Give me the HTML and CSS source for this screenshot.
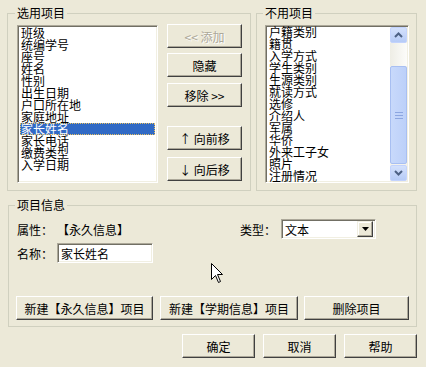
FILE: index.html
```html
<!doctype html>
<html>
<head>
  <meta charset="utf-8">
  <link rel="stylesheet" href="styles.css">
</head>
<body>
  <div class="dialog">
    <div class="top">
      <fieldset class="group groupUsed">
        <legend>选用项目</legend>
        <div class="usedBody">
          <div class="listbox usedList">
            <div class="item">班级</div>
            <div class="item">统编学号</div>
            <div class="item">座号</div>
            <div class="item">姓名</div>
            <div class="item">性别</div>
            <div class="item">出生日期</div>
            <div class="item">户口所在地</div>
            <div class="item">家庭地址</div>
            <div class="item selected">家长姓名</div>
            <div class="item">家长电话</div>
            <div class="item">缴费类型</div>
            <div class="item">入学日期</div>
          </div>
          <div class="btnColumn">
            <button class="btn sideBtn disabled">&lt;&lt; 添加</button>
            <button class="btn sideBtn gapA">隐藏</button>
            <button class="btn sideBtn gapB">移除 &gt;&gt;</button>
            <button class="btn sideBtn gapC">↑ 向前移</button>
            <button class="btn sideBtn gapD">↓ 向后移</button>
          </div>
        </div>
      </fieldset>

      <fieldset class="group groupUnused">
        <legend>不用项目</legend>
        <div class="listbox unusedList">
          <div class="items">
            <div class="item">户籍类别</div>
            <div class="item">籍贯</div>
            <div class="item">入学方式</div>
            <div class="item">学生类别</div>
            <div class="item">生源类别</div>
            <div class="item">就读方式</div>
            <div class="item">选修</div>
            <div class="item">介绍人</div>
            <div class="item">军属</div>
            <div class="item">华侨</div>
            <div class="item">外来工子女</div>
            <div class="item">照片</div>
            <div class="item">注册情况</div>
          </div>
          <div class="scrollbar">
            <div class="sbBtn">
              <svg width="9" height="6" viewBox="0 0 9 6"><path d="M1 5 L4.5 1.5 L8 5" fill="none" stroke="#4d6185" stroke-width="2"/></svg>
            </div>
            <div class="sbTrack"></div>
            <div class="sbThumb">
              <svg width="8" height="7" viewBox="0 0 8 7"><path d="M0 0.5H8M0 3.5H8M0 6.5H8" stroke="#8ca6e0" stroke-width="1"/></svg>
            </div>
            <div class="sbBtn">
              <svg width="9" height="6" viewBox="0 0 9 6"><path d="M1 1 L4.5 4.5 L8 1" fill="none" stroke="#4d6185" stroke-width="2"/></svg>
            </div>
          </div>
        </div>
      </fieldset>
    </div>

    <fieldset class="group groupInfo">
      <legend>项目信息</legend>
      <div class="infoRow">
        <span class="label">属性：</span>
        <span class="value">【永久信息】</span>
        <span class="typeLabel">类型：</span>
        <div class="combo">
          <span class="comboText">文本</span>
          <span class="comboBtn">
            <svg width="7" height="4" viewBox="0 0 7 4"><path d="M0 0H7L3.5 4Z" fill="#000"/></svg>
          </span>
        </div>
      </div>
      <div class="infoRow second">
        <span class="label">名称：</span>
        <div class="textbox">家长姓名</div>
      </div>
      <div class="actionRow">
        <button class="btn newPerm">新建【永久信息】项目</button>
        <button class="btn newTerm">新建【学期信息】项目</button>
        <button class="btn delItem">删除项目</button>
      </div>
    </fieldset>

    <div class="footer">
      <button class="btn footBtn">确定</button>
      <button class="btn footBtn">取消</button>
      <button class="btn footBtn">帮助</button>
    </div>
  </div>

  <svg class="cursor" width="13" height="21" viewBox="0 0 13 21">
    <path d="M0.5 0.5 V16.5 L4.5 12.5 L7.5 19.5 L9.5 18.5 L6.5 11.5 L11.5 11.5 Z" fill="#fff" stroke="#000" stroke-width="1"/>
  </svg>
</body>
</html>
```

FILE: styles.css
```css
body{
  margin:0;
  background:#ece9d8;
  font-family:"Noto Sans CJK SC", "DejaVu Sans", sans-serif;
  font-size:12px;
  color:#000;
}
.dialog{
  width:426px;
  height:367px;
  padding-top:6px;
  box-sizing:border-box;
}
.top{
  display:flex;
  gap:5px;
  margin-left:7px;
}

/* group boxes */
.group{
  margin:0;
  min-width:0;
  border:1px solid #d0d0bf;
  box-sizing:border-box;
}
.group legend{
  padding:0 2px;
  margin-left:-2px;
  line-height:14px;
  font-size:12px;
}
.groupUsed{
  width:244px;
  height:185px;
  padding:5px 8px 0 9px;
}
.groupUnused{
  width:161px;
  height:185px;
  padding:5px 7px 0 8px;
}
.groupInfo{
  width:409px;
  height:129px;
  margin:7px 0 0 8px;
  padding:7px 7px 0 8px;
}

/* list boxes */
.listbox{
  background:#fff;
  border:1px solid;
  border-color:#aca899 #fff #fff #aca899;
  box-shadow:inset 1px 1px 0 #716f64, inset -1px -1px 0 #f1efe2;
  box-sizing:border-box;
  padding:1px 2px 2px 2px;
  height:158px;
  overflow:hidden;
}
.usedBody{
  display:flex;
}
.usedList{
  width:142px;
}
.item{
  height:12px;
  line-height:12px;
  padding-left:1px;
  white-space:nowrap;
}
.item.selected{
  background:#316ac5;
  color:#fff;
  outline:1px dotted #e8c060;
  outline-offset:-1px;
}
.unusedList{
  width:144px;
  display:flex;
  padding:1px 1px 1px 2px;
}
.items{
  flex:1;
  margin-top:-1px;
}

/* scrollbar */
.scrollbar{
  width:17px;
  display:flex;
  flex-direction:column;
  background:#f3f2ec;
}
.sbBtn{
  height:16px;
  background:linear-gradient(#d4e1fc, #b6cbf7);
  border:1px solid #c3d3fd;
  border-radius:2px;
  box-sizing:border-box;
  display:flex;
  align-items:center;
  justify-content:center;
}
.sbTrack{
  height:23px;
  background:linear-gradient(90deg, #eeede5, #fcfcfa);
}
.sbThumb{
  flex:1;
  background:linear-gradient(90deg, #c8d9fb, #bcd0f9);
  border:1px solid #a8bff2;
  border-radius:2px;
  display:flex;
  align-items:center;
  justify-content:center;
  margin-bottom:1px;
}

/* buttons */
.btn{
  font-family:"Noto Sans CJK SC", "DejaVu Sans", sans-serif;
  font-size:12px;
  color:#000;
  background:#ece9d8;
  border:1px solid;
  border-color:#fff #404040 #404040 #fff;
  box-shadow:inset -1px -1px 0 #aca899;
  height:24px;
  padding:0;
  margin:0;
}
.btnColumn{
  display:flex;
  flex-direction:column;
  margin-left:9px;
  margin-top:-1px;
}
.sideBtn{
  width:75px;
}
.disabled{
  color:#aca899;
  text-shadow:1px 1px 0 #fff;
}
.gapA{ margin-top:5px; }
.gapB{ margin-top:6px; }
.gapC{ margin-top:19px; }
.gapD{ margin-top:7px; }

/* info group */
.infoRow{
  display:flex;
  align-items:center;
  height:20px;
}
.infoRow.second{
  margin-top:4px;
}
.label{
  width:40px;
}
.value{
  width:183px;
}
.typeLabel{
  width:41px;
}
.combo{
  width:95px;
  height:20px;
  box-sizing:border-box;
  background:#fff;
  border:1px solid;
  border-color:#aca899 #fff #fff #aca899;
  box-shadow:inset 1px 1px 0 #716f64, inset -1px -1px 0 #f1efe2;
  display:flex;
  align-items:center;
  padding:2px;
}
.comboText{
  flex:1;
  padding-left:1px;
}
.comboBtn{
  width:16px;
  height:16px;
  box-sizing:border-box;
  background:#ece9d8;
  border:1px solid;
  border-color:#f1efe2 #404040 #404040 #f1efe2;
  box-shadow:inset -1px -1px 0 #aca899, inset 1px 1px 0 #fff;
  display:flex;
  align-items:center;
  justify-content:center;
}
.textbox{
  width:96px;
  height:20px;
  box-sizing:border-box;
  background:#fff;
  border:1px solid;
  border-color:#aca899 #fff #fff #aca899;
  box-shadow:inset 1px 1px 0 #716f64, inset -1px -1px 0 #f1efe2;
  padding:2px 3px;
  line-height:15px;
}
.actionRow{
  display:flex;
  margin-top:33px;
  margin-left:-1px;
}
.newPerm{ width:137px; }
.newTerm{ width:138px; margin-left:7px; }
.delItem{ width:105px; margin-left:6px; }

/* bottom buttons */
.footer{
  display:flex;
  justify-content:flex-end;
  gap:8px;
  margin-top:7px;
  margin-right:9px;
}
.footBtn{
  width:73px;
}

.cursor{
  position:absolute;
  left:211px;
  top:263px;
}
```
